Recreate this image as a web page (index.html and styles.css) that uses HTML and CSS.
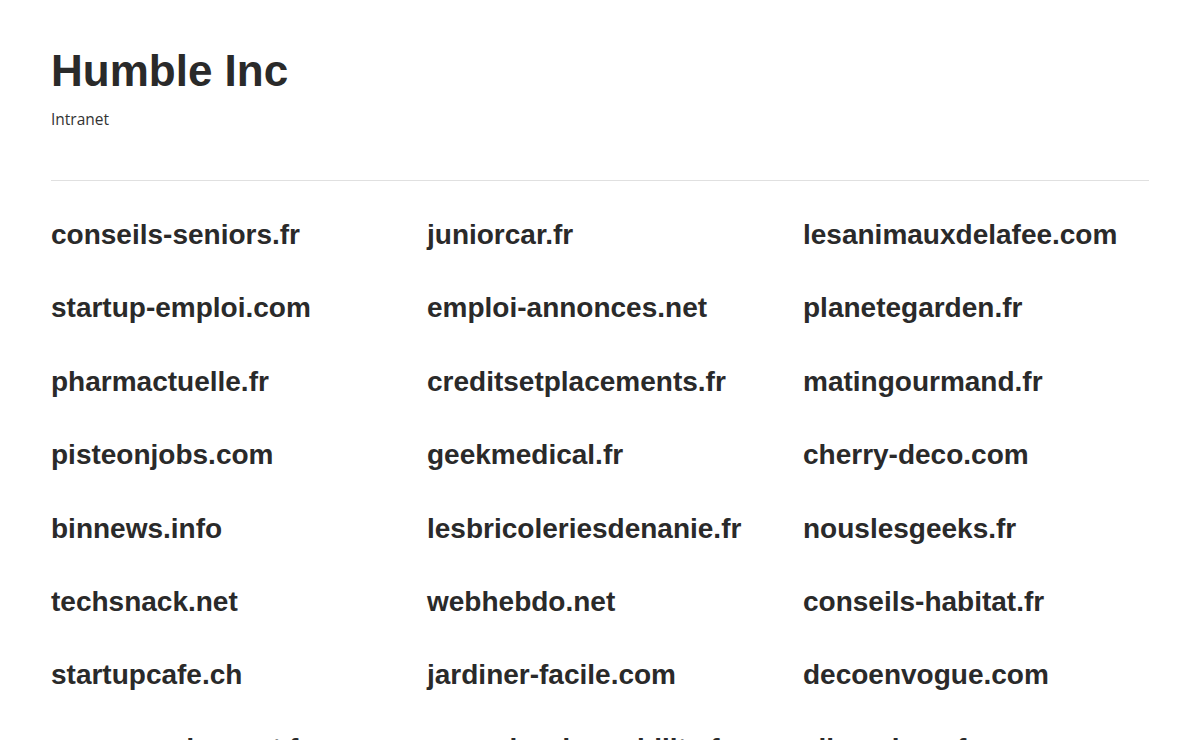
FILE: index.html
```html
<!DOCTYPE html>
<html lang="fr">
<head>
  <meta charset="UTF-8" />
  <meta name="viewport" content="width=device-width, initial-scale=1.0" />
  <title>Humble Inc - Intranet</title>
  <link rel="stylesheet" href="styles.css">
</head>
<body>
  <div class="page">
    <header class="header">
      <h1>Humble Inc</h1>
      <p class="subtitle">Intranet</p>
    </header>

    <!-- liste des sites -->
    <ul class="sites">
      <li><a href="#">conseils-seniors.fr</a></li>
      <li><a href="#">juniorcar.fr</a></li>
      <li><a href="#">lesanimauxdelafee.com</a></li>
      <li><a href="#">startup-emploi.com</a></li>
      <li><a href="#">emploi-annonces.net</a></li>
      <li><a href="#">planetegarden.fr</a></li>
      <li><a href="#">pharmactuelle.fr</a></li>
      <li><a href="#">creditsetplacements.fr</a></li>
      <li><a href="#">matingourmand.fr</a></li>
      <li><a href="#">pisteonjobs.com</a></li>
      <li><a href="#">geekmedical.fr</a></li>
      <li><a href="#">cherry-deco.com</a></li>
      <li><a href="#">binnews.info</a></li>
      <li><a href="#">lesbricoleriesdenanie.fr</a></li>
      <li><a href="#">nouslesgeeks.fr</a></li>
      <li><a href="#">techsnack.net</a></li>
      <li><a href="#">webhebdo.net</a></li>
      <li><a href="#">conseils-habitat.fr</a></li>
      <li><a href="#">startupcafe.ch</a></li>
      <li><a href="#">jardiner-facile.com</a></li>
      <li><a href="#">decoenvogue.com</a></li>
      <li><a href="#">vacancesdusport.fr</a></li>
      <li><a href="#">annuaire-de-mobilite.fr</a></li>
      <li><a href="#">allomaison.fr</a></li>
    </ul>
  </div>
</body>
</html>
```

FILE: styles.css
```css
body, html {
  margin: 0;
  padding: 0;
  background-color: #fff;
  color: #2a2a2a;
  font-family: "Liberation Sans", Arial, sans-serif;
}
.page {
  padding: 45px 51px 0 51px;
}
.header {
  padding-bottom: 49px;
  border-bottom: 1px solid #e0e0e0;
}
h1 {
  margin: 0;
  font-size: 44px;
  line-height: 1.2;
  font-weight: bold;
  color: #2a2a2a;
}
.subtitle {
  margin: 10px 0 0 0;
  font-family: "Open Sans", sans-serif;
  font-size: 15.5px;
  line-height: 1.5;
  color: #333;
}
.sites {
  list-style: none;
  margin: 0;
  padding: 37px 0 0 0;
  display: grid;
  grid-template-columns: repeat(3, 1fr);
  column-gap: 30px;
  row-gap: 39.8px;
}
.sites li {
  font-size: 28px;
  line-height: 1.2;
  font-weight: bold;
}
.sites a {
  color: #2a2a2a;
  text-decoration: none;
}
```
